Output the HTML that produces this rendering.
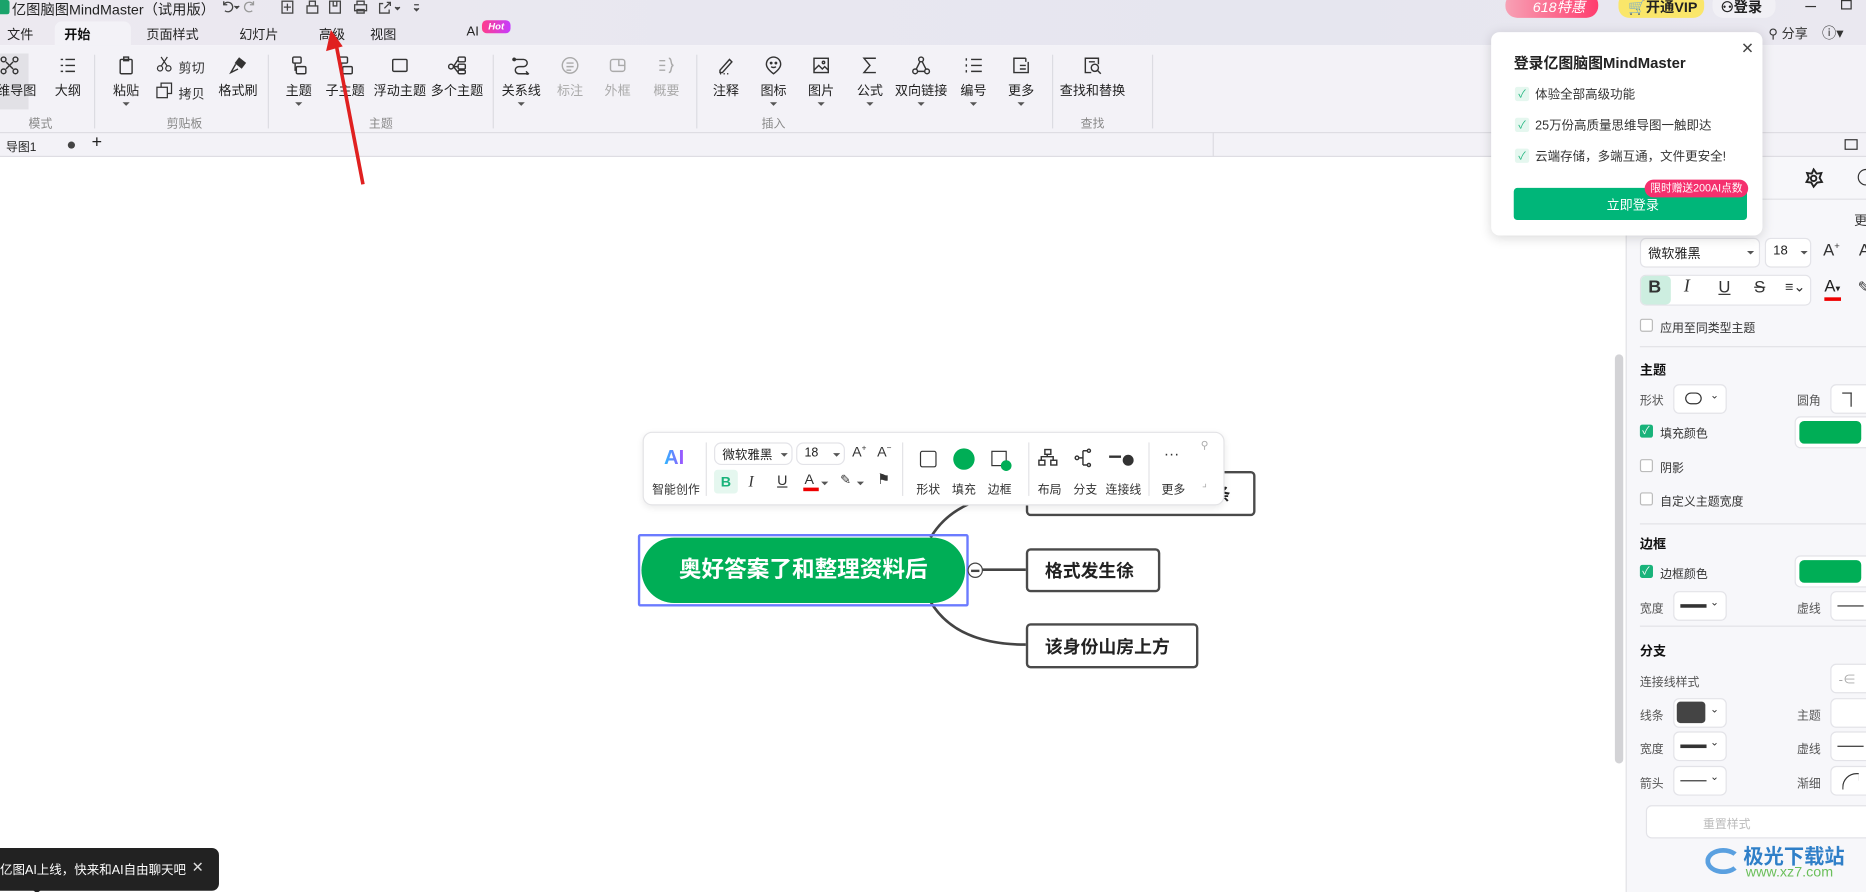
<!DOCTYPE html>
<html><head><meta charset="utf-8">
<style>
*{box-sizing:border-box;margin:0;padding:0}
html,body{width:1866px;height:892px;overflow:hidden;background:#fff}
#w{position:absolute;left:0;top:0;width:1568px;height:750px;transform:scale(1.19005,1.1893);transform-origin:0 0;font-family:"Liberation Sans","Noto Sans CJK SC",sans-serif;font-size:11px;color:#333;overflow:hidden;background:#fff}
.a{position:absolute}
.t{position:absolute;white-space:nowrap}
.lbl{position:absolute;white-space:nowrap;font-size:11px;color:#222;transform:translateX(-50%)}
.dd{position:absolute;width:0;height:0;border-left:3px solid transparent;border-right:3px solid transparent;border-top:3px solid #555;transform:translateX(-50%)}
.sep{position:absolute;top:46px;width:1px;height:62px;background:#dcdce2}
.gl{position:absolute;top:95px;font-size:10px;color:#888;transform:translateX(-50%)}
.i{position:absolute;top:47px;width:16px;height:16px;fill:none;stroke:#333;stroke-width:1.2}
.g{stroke:#aaa}
.box{position:absolute;border:1px solid #e3e3e8;border-radius:5px;background:#fff}
.cb{position:absolute;width:11px;height:11px;border:1px solid #bbb;border-radius:2px;background:#fff}
.cbo{position:absolute;width:11px;height:11px;border-radius:2px;background:#19b37a}
.rp{font-size:10px;color:#333}
.hd{font-weight:bold;font-size:11px;color:#111}
.tab{position:absolute;top:21px;font-size:11px;color:#222;white-space:nowrap}
.node{position:absolute;border:2px solid #4a4a4a;border-radius:4px;background:#fff;font-weight:bold;font-size:15px;color:#222;display:flex;align-items:center;padding-left:14px;white-space:nowrap}
</style></head><body><div id="w">

<!-- title/tab area -->
<div class="a" style="left:0;top:0;width:1568px;height:38px;background:linear-gradient(90deg,#ece9f0,#e8e7f0 40%,#e6e6ef 70%,#eae8f0)"></div>
<div class="a" style="left:0;top:0;width:8px;height:12px;background:#1aa36b;border-radius:0 2px 2px 0"></div>
<div class="t" style="left:10px;top:-1px;font-size:12px;color:#222">亿图脑图MindMaster（试用版）</div>
<svg class="a" style="left:185px;top:0" width="170" height="12" fill="none" stroke="#444" stroke-width="1.1">
 <path d="M3 4a4 4 0 1 1 1 5M3 1v3h3"/><path d="M12 5l2 2 2-2" fill="#444"/>
 <path d="M28 4a4 4 0 1 0-1 5M28 1v3h-3" stroke="#999"/>
 <rect x="52" y="1" width="9" height="10"/><path d="M56.5 3v6M53.5 6h6"/>
 <path d="M73 5h9v6h-9zM75 5V1h5v4"/>
 <rect x="92" y="1" width="9" height="10"/><path d="M95 1v4h3V1"/>
 <path d="M113 4h10v5h-10zM115 4V1h6v3M115 8h6v3h-6z"/>
 <path d="M137 3h-3v8h8v-3M138 7l5-5M140 2h3v3"/><path d="M147 6l2 2 2-2" fill="#444"/>
 <path d="M163 4h4M163 7l2 2 2-2" fill="#444"/>
</svg>
<!-- right top -->
<div class="a" style="left:1265px;top:-6px;width:78px;height:21px;border-radius:10px;background:linear-gradient(90deg,#f7a1b5,#ff3d6e);"></div>
<div class="t" style="left:1288px;top:-3px;color:#fff;font-size:12px;font-style:italic">618特惠</div>
<div class="a" style="left:1360px;top:-6px;width:72px;height:21px;border-radius:9px;background:#fae66a"></div>
<div class="t" style="left:1368px;top:-3px;font-size:12px;font-weight:bold;color:#222">🛒开通VIP</div>
<div class="a" style="left:1439px;top:-6px;width:53px;height:21px;border-radius:9px;background:#f1f0f5"></div>
<div class="t" style="left:1446px;top:-3px;font-size:12px;font-weight:bold;color:#222">⚇登录</div>
<div class="a" style="left:1517px;top:5px;width:9px;height:1px;background:#333"></div>
<div class="a" style="left:1547px;top:0px;width:9px;height:8px;border:1px solid #333"></div>
<div class="t" style="left:1486px;top:20px;font-size:11px;color:#333">⚲ 分享</div>
<div class="t" style="left:1531px;top:19px;font-size:12px;color:#333">ⓘ▾</div>
<!-- tabs -->
<div class="a" style="left:46px;top:18px;width:64px;height:21px;background:#f3f2f7;border-radius:6px 6px 0 0"></div>
<div class="tab" style="left:6px">文件</div>
<div class="tab" style="left:54px;font-weight:bold;color:#111">开始</div>
<div class="tab" style="left:123px">页面样式</div>
<div class="tab" style="left:201px">幻灯片</div>
<div class="tab" style="left:268px">高级</div>
<div class="tab" style="left:311px">视图</div>
<div class="tab" style="left:392px">AI</div>
<div class="a" style="left:405px;top:17px;width:24px;height:11px;border-radius:4px;background:linear-gradient(90deg,#ff3d8b,#c53bff);color:#fff;font-size:8px;font-style:italic;font-weight:bold;text-align:center;line-height:11px">Hot</div>

<!-- ribbon -->
<div class="a" style="left:0;top:38px;width:1568px;height:73px;background:#f3f2f7"></div>
<div class="a" style="left:0;top:45px;width:24px;height:47px;background:#e2e1e6"></div>
<div class="a" style="left:0;top:111px;width:1568px;height:21px;background:#f3f2f7;border-top:1px solid #dedde3;border-bottom:1px solid #dedde3"></div>
<div class="t" style="left:5px;top:115px;font-size:10px;color:#222">导图1</div>
<div class="a" style="left:57px;top:119px;width:6px;height:6px;border-radius:50%;background:#444"></div>
<div class="t" style="left:77px;top:111px;font-size:15px;color:#222">+</div>
<div class="a" style="left:1019px;top:111px;width:1px;height:21px;background:#dcdce2"></div>
<div class="a" style="left:1550px;top:117px;width:11px;height:9px;border:1px solid #333"></div>

<!-- ribbon icons -->
<svg class="i" style="left:0px" viewBox="0 0 16 16"><circle cx="3" cy="3" r="2"/><circle cx="13" cy="3" r="2"/><circle cx="3" cy="13" r="2"/><circle cx="13" cy="13" r="2"/><path d="M5 5l6 6M11 5l-6 6"/></svg>
<svg class="i" style="left:49px" viewBox="0 0 16 16"><path d="M2 3h2M6 3h8M2 8h2M6 8h8M2 13h2M6 13h8"/></svg>
<svg class="i" style="left:98px" viewBox="0 0 16 16"><rect x="3" y="3" width="10" height="12" rx="1"/><path d="M6 1h4v3H6z"/></svg>
<svg class="i" style="left:131px;top:47px;width:14px;height:14px" viewBox="0 0 16 16"><circle cx="4" cy="12" r="2.5"/><circle cx="12" cy="12" r="2.5"/><path d="M5 10L11 1M11 10L5 1"/></svg>
<svg class="i" style="left:131px;top:69px;width:14px;height:14px" viewBox="0 0 16 16"><rect x="1" y="5" width="10" height="10"/><path d="M5 5V1h10v10h-4"/></svg>
<svg class="i" style="left:192px" viewBox="0 0 16 16"><path d="M9 2l5 4-3 4-5-4z" fill="#333"/><path d="M6 7l-4 7 6-3"/></svg>
<svg class="i" style="left:243px" viewBox="0 0 16 16"><rect x="3" y="1" width="7" height="5" rx="1"/><rect x="6" y="9" width="8" height="6" rx="1"/><path d="M5 6v6h1"/></svg>
<svg class="i" style="left:282px" viewBox="0 0 16 16"><rect x="3" y="1" width="7" height="5" rx="1"/><rect x="6" y="9" width="8" height="6" rx="1"/><path d="M5 6v6h1"/></svg>
<svg class="i" style="left:328px" viewBox="0 0 16 16"><rect x="2" y="3" width="12" height="10" rx="1"/></svg>
<svg class="i" style="left:376px" viewBox="0 0 16 16"><circle cx="3" cy="9" r="2"/><rect x="9" y="1" width="6" height="4" rx="1"/><rect x="9" y="7" width="6" height="4" rx="1"/><rect x="9" y="12" width="6" height="3" rx="1"/><path d="M5 9l4-6M5 9h4M5 9l4 5"/></svg>
<svg class="i" style="left:430px" viewBox="0 0 16 16"><path d="M2 3h8a3 3 0 0 1 0 6H6a3 3 0 0 0 0 6h8"/><path d="M12 13l2 2-2 2"/><circle cx="2" cy="3" r="1" fill="#333"/></svg>
<svg class="i g" style="left:471px" viewBox="0 0 16 16"><circle cx="8" cy="8" r="6.5"/><path d="M5 6h6M5 9h6M5 12h4"/></svg>
<svg class="i g" style="left:511px" viewBox="0 0 16 16"><rect x="2" y="3" width="12" height="10" rx="2"/><path d="M9 3v5h5"/></svg>
<svg class="i g" style="left:552px" viewBox="0 0 16 16"><path d="M2 4h5M2 8h5M2 12h5M10 2c3 0 1 6 4 6-3 0-1 6-4 6"/></svg>
<svg class="i" style="left:602px" viewBox="0 0 16 16"><path d="M3 12L11 3l2 2-8 9H3zM3 15h1M6 15h1M9 15h1"/></svg>
<svg class="i" style="left:642px" viewBox="0 0 16 16"><path d="M8 1a6 6 0 0 1 6 6c0 4-6 8-6 8S2 11 2 7a6 6 0 0 1 6-6z"/><circle cx="6" cy="6" r=".6" fill="#333"/><circle cx="10" cy="6" r=".6" fill="#333"/><path d="M6 9c1 1 3 1 4 0"/></svg>
<svg class="i" style="left:682px" viewBox="0 0 16 16"><rect x="2" y="2" width="12" height="12"/><path d="M2 12l4-4 3 3 2-2 3 3"/><circle cx="10" cy="5.5" r="1"/></svg>
<svg class="i" style="left:723px" viewBox="0 0 16 16"><path d="M13 2H3l5 6-5 6h10"/></svg>
<svg class="i" style="left:766px" viewBox="0 0 16 16"><circle cx="8" cy="3" r="2"/><circle cx="3" cy="13" r="2"/><circle cx="13" cy="13" r="2"/><path d="M7 5l-3 6M9 5l3 6M5 13h6"/></svg>
<svg class="i" style="left:810px" viewBox="0 0 16 16"><path d="M6 3h9M6 8h9M6 13h9M2 2v2M2 7v2M2 12v2"/></svg>
<svg class="i" style="left:850px" viewBox="0 0 16 16"><path d="M12 2H2v12h12V5M7 8h5M7 11h5M12 2v3"/></svg>
<svg class="i" style="left:910px" viewBox="0 0 16 16"><path d="M13 7V2H2v12h5M5 5h5"/><circle cx="10" cy="10" r="3"/><path d="M12 12l3 3"/></svg>

<div class="lbl" style="left:14px;top:68px">维导图</div>
<div class="lbl" style="left:57px;top:68px">大纲</div>
<div class="lbl" style="left:106px;top:68px">粘贴</div><div class="dd" style="left:106px;top:86px"></div>
<div class="t" style="left:150px;top:49px;font-size:11px">剪切</div>
<div class="t" style="left:150px;top:71px;font-size:11px">拷贝</div>
<div class="lbl" style="left:200px;top:68px">格式刷</div>
<div class="lbl" style="left:251px;top:68px">主题</div><div class="dd" style="left:251px;top:86px"></div>
<div class="lbl" style="left:290px;top:68px">子主题</div>
<div class="lbl" style="left:336px;top:68px">浮动主题</div>
<div class="lbl" style="left:384px;top:68px">多个主题</div>
<div class="lbl" style="left:438px;top:68px">关系线</div><div class="dd" style="left:438px;top:86px"></div>
<div class="lbl" style="left:479px;top:68px;color:#aaa">标注</div>
<div class="lbl" style="left:519px;top:68px;color:#aaa">外框</div>
<div class="lbl" style="left:560px;top:68px;color:#aaa">概要</div>
<div class="lbl" style="left:610px;top:68px">注释</div>
<div class="lbl" style="left:650px;top:68px">图标</div><div class="dd" style="left:650px;top:86px"></div>
<div class="lbl" style="left:690px;top:68px">图片</div><div class="dd" style="left:690px;top:86px"></div>
<div class="lbl" style="left:731px;top:68px">公式</div><div class="dd" style="left:731px;top:86px"></div>
<div class="lbl" style="left:774px;top:68px">双向链接</div><div class="dd" style="left:774px;top:86px"></div>
<div class="lbl" style="left:818px;top:68px">编号</div><div class="dd" style="left:818px;top:86px"></div>
<div class="lbl" style="left:858px;top:68px">更多</div><div class="dd" style="left:858px;top:86px"></div>
<div class="lbl" style="left:918px;top:68px">查找和替换</div>
<div class="sep" style="left:79px"></div><div class="sep" style="left:225px"></div><div class="sep" style="left:414px"></div><div class="sep" style="left:585px"></div><div class="sep" style="left:884px"></div><div class="sep" style="left:968px"></div>
<div class="gl" style="left:34px">模式</div>
<div class="gl" style="left:155px">剪贴板</div>
<div class="gl" style="left:320px">主题</div>
<div class="gl" style="left:650px">插入</div>
<div class="gl" style="left:918px">查找</div>

<!-- red arrow -->
<svg class="a" style="left:260px;top:15px" width="60" height="150"><path d="M45 140L22 20" stroke="#e02020" stroke-width="3"/><path d="M18 10l-4 18 14-4z" fill="#e02020"/></svg>

<!-- canvas scrollbar -->
<div class="a" style="left:1357px;top:298px;width:7px;height:344px;border-radius:4px;background:#d3d3d6"></div>

<!-- right panel -->
<div class="a" style="left:1366px;top:132px;width:202px;height:618px;background:#f7f7fa;border-left:1px solid #e2e2e6"></div>
<svg class="a" style="left:1515px;top:141px" width="18" height="18" fill="none" stroke="#222" stroke-width="1.6"><path d="M9 1.5l2.5 3.5 4-.5-1.5 4 2 3.5-4 .5L9 16l-2-3.5-4-.5 2-3.5-1.5-4 4 .5z"/><circle cx="9" cy="9" r="2.3"/></svg>
<div class="a" style="left:1561px;top:142px;width:14px;height:14px;border:1.5px solid #333;border-radius:50%"></div>
<div class="a" style="left:1366px;top:167px;width:202px;height:1px;background:#e2e2e6"></div>
<div class="t" style="left:1558px;top:177px;font-size:11px">更</div>
<div class="box" style="left:1378px;top:200px;width:101px;height:25px"></div>
<div class="t" style="left:1385px;top:205px;font-size:11px;color:#222">微软雅黑</div><div class="dd" style="left:1471px;top:211px"></div>
<div class="box" style="left:1483px;top:200px;width:39px;height:25px"></div>
<div class="t" style="left:1490px;top:205px;font-size:11px;color:#222">18</div><div class="dd" style="left:1516px;top:211px"></div>
<div class="t" style="left:1532px;top:202px;font-size:14px">A<sup style="font-size:8px">+</sup></div>
<div class="t" style="left:1562px;top:202px;font-size:14px">A</div>
<div class="box" style="left:1378px;top:231px;width:144px;height:26px"></div>
<div class="a" style="left:1379px;top:232px;width:25px;height:24px;background:#cdeee0;border-radius:4px"></div>
<div class="t" style="left:1385px;top:233px;font-size:15px;font-weight:bold;color:#333">B</div>
<div class="t" style="left:1415px;top:233px;font-size:15px;font-style:italic;font-family:'Liberation Serif',serif">I</div>
<div class="t" style="left:1444px;top:233px;font-size:14px;text-decoration:underline">U</div>
<div class="t" style="left:1474px;top:233px;font-size:14px;text-decoration:line-through">S</div>
<div class="t" style="left:1500px;top:234px;font-size:12px">≡⌄</div>
<div class="t" style="left:1533px;top:232px;font-size:14px;color:#222">A<span style="font-size:8px">▾</span></div>
<div class="a" style="left:1533px;top:250px;width:14px;height:3px;background:#e00"></div>
<div class="t" style="left:1561px;top:234px;font-size:13px">✎</div>
<div class="cb" style="left:1378px;top:268px"></div><div class="t rp" style="left:1395px;top:267px">应用至同类型主题</div>
<div class="a" style="left:1378px;top:291px;width:190px;height:1px;background:#e2e2e6"></div>
<div class="t hd" style="left:1378px;top:303px">主题</div>
<div class="t rp" style="left:1378px;top:328px;color:#555">形状</div>
<div class="box" style="left:1406px;top:323px;width:45px;height:25px"></div>
<div class="a" style="left:1416px;top:330px;width:14px;height:10px;border:1.3px solid #333;border-radius:6px"></div>
<div class="t" style="left:1437px;top:327px;font-size:9px">⌄</div>
<div class="t rp" style="left:1510px;top:328px;color:#555">圆角</div>
<div class="box" style="left:1538px;top:323px;width:40px;height:25px"></div>
<div class="a" style="left:1548px;top:330px;width:8px;height:12px;border-top:1.3px solid #333;border-right:1.3px solid #333"></div>
<div class="cbo" style="left:1378px;top:357px"></div><div class="t" style="left:1380px;top:355px;color:#fff;font-size:9px">✓</div>
<div class="t rp" style="left:1395px;top:356px">填充颜色</div>
<div class="box" style="left:1508px;top:350px;width:70px;height:27px"></div>
<div class="a" style="left:1512px;top:354px;width:52px;height:19px;background:#00ae56;border-radius:4px"></div>
<div class="cb" style="left:1378px;top:386px"></div><div class="t rp" style="left:1395px;top:385px">阴影</div>
<div class="cb" style="left:1378px;top:414px"></div><div class="t rp" style="left:1395px;top:413px">自定义主题宽度</div>
<div class="a" style="left:1378px;top:440px;width:190px;height:1px;background:#e2e2e6"></div>
<div class="t hd" style="left:1378px;top:449px">边框</div>
<div class="cbo" style="left:1378px;top:475px"></div><div class="t" style="left:1380px;top:473px;color:#fff;font-size:9px">✓</div>
<div class="t rp" style="left:1395px;top:474px">边框颜色</div>
<div class="box" style="left:1508px;top:467px;width:70px;height:27px"></div>
<div class="a" style="left:1512px;top:471px;width:52px;height:19px;background:#00ae56;border-radius:4px"></div>
<div class="t rp" style="left:1378px;top:503px;color:#555">宽度</div>
<div class="box" style="left:1406px;top:497px;width:45px;height:25px"></div>
<div class="a" style="left:1412px;top:508px;width:22px;height:3px;background:#333"></div><div class="t" style="left:1437px;top:501px;font-size:9px">⌄</div>
<div class="t rp" style="left:1510px;top:503px;color:#555">虚线</div>
<div class="box" style="left:1538px;top:497px;width:40px;height:25px"></div>
<div class="a" style="left:1544px;top:509px;width:22px;height:1px;background:#333"></div>
<div class="a" style="left:1378px;top:526px;width:190px;height:1px;background:#e2e2e6"></div>
<div class="t hd" style="left:1378px;top:539px">分支</div>
<div class="t rp" style="left:1378px;top:565px;color:#555">连接线样式</div>
<div class="box" style="left:1538px;top:558px;width:40px;height:25px"></div>
<div class="t" style="left:1545px;top:563px;font-size:11px;color:#aaa">-∈</div>
<div class="t rp" style="left:1378px;top:593px;color:#555">线条</div>
<div class="box" style="left:1406px;top:587px;width:45px;height:25px"></div>
<div class="a" style="left:1409px;top:590px;width:24px;height:18px;background:#444;border-radius:3px"></div><div class="t" style="left:1437px;top:591px;font-size:9px">⌄</div>
<div class="t rp" style="left:1510px;top:593px;color:#555">主题</div>
<div class="box" style="left:1538px;top:587px;width:40px;height:25px"></div>
<div class="t rp" style="left:1378px;top:621px;color:#555">宽度</div>
<div class="box" style="left:1406px;top:615px;width:45px;height:25px"></div>
<div class="a" style="left:1412px;top:626px;width:22px;height:3px;background:#333"></div><div class="t" style="left:1437px;top:619px;font-size:9px">⌄</div>
<div class="t rp" style="left:1510px;top:621px;color:#555">虚线</div>
<div class="box" style="left:1538px;top:615px;width:40px;height:25px"></div>
<div class="a" style="left:1544px;top:627px;width:22px;height:1px;background:#333"></div>
<div class="t rp" style="left:1378px;top:650px;color:#555">箭头</div>
<div class="box" style="left:1406px;top:644px;width:45px;height:25px"></div>
<div class="a" style="left:1412px;top:656px;width:22px;height:1px;background:#333"></div><div class="t" style="left:1437px;top:648px;font-size:9px">⌄</div>
<div class="t rp" style="left:1510px;top:650px;color:#555">渐细</div>
<div class="box" style="left:1538px;top:644px;width:40px;height:25px"></div>
<div class="a" style="left:1548px;top:650px;width:14px;height:14px;border-left:1.5px solid #333;border-top:1.5px solid #333;border-radius:12px 0 0 0"></div>
<div class="box" style="left:1383px;top:677px;width:200px;height:28px"></div>
<div class="t" style="left:1431px;top:684px;font-size:10px;color:#bbb">重置样式</div>
<div class="t" style="left:1465px;top:706px;font-size:17px;font-weight:bold;color:#2f7fc8">极光下载站</div>
<div class="t" style="left:1467px;top:726px;font-size:12px;color:#6bbf5a">www.xz7.com</div>
<div class="a" style="left:1433px;top:713px;width:30px;height:22px;border:4px solid #5aa0e0;border-radius:50%;border-right-color:transparent"></div>

<!-- popup -->
<div class="a" style="left:1253px;top:27px;width:228px;height:171px;background:#fff;border-radius:7px;box-shadow:0 2px 10px rgba(0,0,0,.15)"></div>
<div class="t" style="left:1272px;top:42px;font-size:12.5px;font-weight:bold;color:#222">登录亿图脑图MindMaster</div>
<div class="t" style="left:1463px;top:33px;font-size:13px;color:#444">✕</div>
<div class="a" style="left:1273px;top:73px;width:12px;height:12px;background:#e5f7ef;border-radius:2px;color:#19b37a;font-size:9px;text-align:center;line-height:12px">✓</div>
<div class="t" style="left:1290px;top:72px;font-size:10.5px;color:#333">体验全部高级功能</div>
<div class="a" style="left:1273px;top:99px;width:12px;height:12px;background:#e5f7ef;border-radius:2px;color:#19b37a;font-size:9px;text-align:center;line-height:12px">✓</div>
<div class="t" style="left:1290px;top:98px;font-size:10.5px;color:#333">25万份高质量思维导图一触即达</div>
<div class="a" style="left:1273px;top:125px;width:12px;height:12px;background:#e5f7ef;border-radius:2px;color:#19b37a;font-size:9px;text-align:center;line-height:12px">✓</div>
<div class="t" style="left:1290px;top:124px;font-size:10.5px;color:#333">云端存储，多端互通，文件更安全!</div>
<div class="a" style="left:1272px;top:158px;width:196px;height:27px;background:#00b679;border-radius:3px"></div>
<div class="t" style="left:1350px;top:164px;font-size:11px;color:#fff">立即登录</div>
<div class="a" style="left:1382px;top:151px;width:87px;height:15px;background:#f5306e;border-radius:8px;color:#fff;font-size:9px;text-align:center;line-height:15px">限时赠送200AI点数</div>

<!-- mind map -->
<svg class="a" style="left:770px;top:400px" width="100" height="170" fill="none" stroke="#444" stroke-width="2.2">
 <path d="M12 52C25 30 50 15 92 15"/>
 <path d="M54 79H92"/>
 <path d="M12 106C25 128 50 142 92 142"/>
</svg>
<div class="node" style="left:862px;top:396px;width:193px;height:38px;padding-left:155px">条</div>
<div class="node" style="left:862px;top:461px;width:113px;height:37px">格式发生徐</div>
<div class="node" style="left:862px;top:524px;width:145px;height:38px">该身份山房上方</div>
<div class="a" style="left:536px;top:449px;width:278px;height:61px;border:2px solid #6b7bff;border-radius:2px"></div>
<div class="a" style="left:539px;top:452px;width:272px;height:55px;background:#00ae56;border-radius:28px;color:#fff;font-weight:bold;font-size:19px;text-align:center;line-height:55px">奥好答案了和整理资料后</div>
<div class="a" style="left:813px;top:473px;width:13px;height:13px;border:1.5px solid #444;border-radius:50%;background:#fff"></div>
<div class="a" style="left:816px;top:479px;width:7px;height:1.5px;background:#444"></div>

<!-- floating toolbar -->
<div class="a" style="left:540px;top:363px;width:489px;height:62px;background:#fff;border:1px solid #e3e3e6;border-radius:8px;box-shadow:0 2px 6px rgba(0,0,0,.08)"></div>
<div class="t" style="left:558px;top:375px;font-size:17px;font-weight:bold;background:linear-gradient(90deg,#2bb8ff,#a64dff);-webkit-background-clip:text;color:transparent">AI</div>
<div class="t" style="left:548px;top:403px;font-size:10px;color:#333">智能创作</div>
<div class="a" style="left:593px;top:372px;width:1px;height:45px;background:#e3e3e6"></div>
<div class="box" style="left:600px;top:372px;width:66px;height:19px;border-radius:6px"></div>
<div class="t" style="left:607px;top:375px;font-size:10.5px;color:#222">微软雅黑</div><div class="dd" style="left:659px;top:381px"></div>
<div class="box" style="left:669px;top:372px;width:41px;height:19px;border-radius:6px"></div>
<div class="t" style="left:676px;top:375px;font-size:10.5px;color:#222">18</div><div class="dd" style="left:703px;top:381px"></div>
<div class="t" style="left:716px;top:373px;font-size:12px">A<sup style="font-size:7px">+</sup></div>
<div class="t" style="left:737px;top:373px;font-size:12px">A<sup style="font-size:7px">−</sup></div>
<div class="a" style="left:600px;top:395px;width:20px;height:20px;background:#e5f7ef;border-radius:3px;color:#19b37a;font-weight:bold;font-size:12px;text-align:center;line-height:20px">B</div>
<div class="t" style="left:629px;top:397px;font-size:13px;font-style:italic;font-family:'Liberation Serif',serif">I</div>
<div class="t" style="left:653px;top:397px;font-size:12px;text-decoration:underline">U</div>
<div class="t" style="left:676px;top:396px;font-size:12px">A</div><div class="a" style="left:675px;top:410px;width:13px;height:3px;background:#e00"></div><div class="dd" style="left:693px;top:405px"></div>
<div class="t" style="left:706px;top:397px;font-size:11px">✎</div><div class="dd" style="left:723px;top:405px"></div>
<div class="t" style="left:737px;top:396px;font-size:12px">⚑</div>
<div class="a" style="left:758px;top:372px;width:1px;height:45px;background:#e3e3e6"></div>
<div class="a" style="left:773px;top:379px;width:14px;height:14px;border:1.4px solid #333;border-radius:2px"></div>
<div class="t" style="left:770px;top:403px;font-size:10px">形状</div>
<div class="a" style="left:801px;top:377px;width:18px;height:18px;border-radius:50%;background:#00ae56"></div>
<div class="t" style="left:800px;top:403px;font-size:10px">填充</div>
<div class="a" style="left:833px;top:379px;width:13px;height:13px;border:1.4px solid #333"></div>
<div class="a" style="left:841px;top:387px;width:9px;height:9px;border-radius:50%;background:#00ae56"></div>
<div class="t" style="left:830px;top:403px;font-size:10px">边框</div>
<div class="a" style="left:864px;top:372px;width:1px;height:45px;background:#e3e3e6"></div>
<svg class="a" style="left:870px;top:375px" width="90" height="20" fill="none" stroke="#333" stroke-width="1.2">
<rect x="8" y="3" width="5" height="4"/><rect x="3" y="12" width="5" height="4"/><rect x="13" y="12" width="5" height="4"/><path d="M10 7v2H5v3M10 9h5v3"/>
<circle cx="35" cy="10" r="1.5"/><path d="M37 10h3M40 4v12M40 4h4M40 16h4"/><circle cx="45" cy="4" r="1.3"/><circle cx="45" cy="16" r="1.3"/>
<path d="M62 9h10" stroke-width="2"/><circle cx="78" cy="12" r="4" fill="#333"/>
</svg>
<div class="t" style="left:872px;top:403px;font-size:10px">布局</div>
<div class="t" style="left:902px;top:403px;font-size:10px">分支</div>
<div class="t" style="left:929px;top:403px;font-size:10px">连接线</div>
<div class="a" style="left:965px;top:372px;width:1px;height:45px;background:#e3e3e6"></div>
<div class="t" style="left:978px;top:374px;font-size:13px">···</div>
<div class="t" style="left:976px;top:403px;font-size:10px">更多</div>
<div class="t" style="left:1009px;top:369px;font-size:9px;color:#aaa">⚲</div>
<div class="t" style="left:1010px;top:401px;font-size:9px;color:#aaa">⌟</div>

<!-- toast -->
<div class="a" style="left:0;top:713px;width:184px;height:36px;background:#222;border-radius:0 6px 6px 0"></div>
<div class="t" style="left:0;top:724px;font-size:10.5px;color:#fff">亿图AI上线，快来和AI自由聊天吧</div>
<div class="t" style="left:161px;top:722px;font-size:12px;color:#ddd">✕</div>
<div class="a" style="left:27px;top:748px;width:0;height:0;border-left:4px solid transparent;border-right:4px solid transparent;border-top:3px solid #222"></div>

</div></body></html>
